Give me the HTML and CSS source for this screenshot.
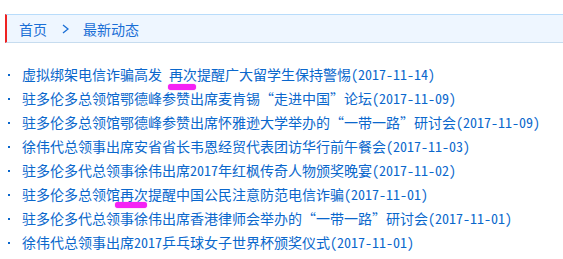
FILE: index.html
```html
<!DOCTYPE html>
<html lang="zh-CN">
<head>
  <meta charset="UTF-8">
  <title>最新动态</title>
  <link rel="stylesheet" href="styles.css">
</head>
<body>
  <div class="crumbs">
    <a href="#">首页</a>
    <svg class="chev" width="7" height="10" viewBox="0 0 7 10"><polyline points="1,1 6,5 1,9" fill="none" stroke="#1a6fd6" stroke-width="1.3"/></svg>
    <a href="#">最新动态</a>
  </div>

  <ul class="news">
    <li><i class="dot"></i><a href="#">虚拟绑架电信诈骗高发 <span class="mark mark-a">再次</span>提醒广大留学生保持警惕</a><span class="date">(2017-11-14)</span></li>
    <li><i class="dot"></i><a href="#">驻多伦多总领馆鄂德峰参赞出席麦肯锡“走进中国”论坛</a><span class="date">(2017-11-09)</span></li>
    <li><i class="dot"></i><a href="#">驻多伦多总领馆鄂德峰参赞出席怀雅逊大学举办的“一带一路”研讨会</a><span class="date">(2017-11-09)</span></li>
    <li><i class="dot"></i><a href="#">徐伟代总领事出席安省省长韦恩经贸代表团访华行前午餐会</a><span class="date">(2017-11-03)</span></li>
    <li><i class="dot"></i><a href="#">驻多伦多代总领事徐伟出席2017年红枫传奇人物颁奖晚宴</a><span class="date">(2017-11-02)</span></li>
    <li><i class="dot"></i><a href="#">驻多伦多总领馆<span class="mark mark-b">再次</span>提醒中国公民注意防范电信诈骗</a><span class="date">(2017-11-01)</span></li>
    <li><i class="dot"></i><a href="#">驻多伦多代总领事徐伟出席香港律师会举办的“一带一路”研讨会</a><span class="date">(2017-11-01)</span></li>
    <li><i class="dot"></i><a href="#">徐伟代总领事出席2017乒乓球女子世界杯颁奖仪式</a><span class="date">(2017-11-01)</span></li>
  </ul>
</body>
</html>
```

FILE: styles.css
```css
body {
  margin: 0;
  background: #fff;
  font-family: "Noto Sans Mono CJK SC", "Noto Sans CJK SC", sans-serif;
  font-size: 14px;
  color: #0a67cc;
}
a {
  color: inherit;
  text-decoration: none;
}
.crumbs {
  margin: 14px 0 0 5px;
  height: 27px;
  display: flex;
  align-items: center;
  padding-left: 12px;
  background: #eef6ff;
  border-top: 1px solid #b8dcfb;
  border-bottom: 1px solid #c6dcef;
  border-left: 2px solid #ee2222;
  color: #1a6fd6;
}
.chev {
  margin: 0 14px 0 15px;
}
.news {
  list-style: none;
  margin: 19px 0 0;
  padding: 0;
}
.news li {
  display: flex;
  align-items: center;
  height: 24px;
  white-space: nowrap;
}
.dot {
  width: 2px;
  height: 2px;
  margin: 1px 12px 0 8px;
  background: #0a67cc;
}
.mark {
  position: relative;
}
.mark::after {
  content: "";
  position: absolute;
  height: 6px;
  border-radius: 3px;
  background: #f522f5;
  box-shadow: 0 0 1px #f522f5;
}
.mark-a::after {
  left: -1px;
  right: 1px;
  bottom: -6px;
}
.mark-b::after {
  left: -5px;
  right: 1px;
  bottom: -4px;
}
```
